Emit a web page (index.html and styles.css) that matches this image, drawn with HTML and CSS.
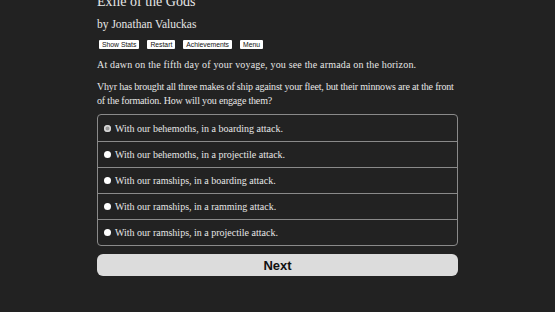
FILE: index.html
```html
<!DOCTYPE html>
<html>
<head>
<meta charset="utf-8">
<link rel="stylesheet" href="styles.css">
</head>
<body>
<div class="page">
  <h1 class="title">Exile of the Gods</h1>
  <h2 class="author">by Jonathan Valuckas</h2>
  <div class="toolbar">
    <button class="tb">Show Stats</button>
    <button class="tb">Restart</button>
    <button class="tb">Achievements</button>
    <button class="tb">Menu</button>
  </div>
  <p class="p1">At dawn on the fifth day of your voyage, you see the armada on the horizon.</p>
  <p class="p2">Vhyr has brought all three makes of ship against your fleet, but their minnows are at the front of the formation. How will you engage them?</p>
  <div class="choices">
    <label class="choice"><span class="radio checked"></span>With our behemoths, in a boarding attack.</label>
    <label class="choice"><span class="radio"></span>With our behemoths, in a projectile attack.</label>
    <label class="choice"><span class="radio"></span>With our ramships, in a boarding attack.</label>
    <label class="choice"><span class="radio"></span>With our ramships, in a ramming attack.</label>
    <label class="choice"><span class="radio"></span>With our ramships, in a projectile attack.</label>
  </div>
  <button class="next">Next</button>
</div>
</body>
</html>
```
FILE: styles.css
```css
html, body {
  margin: 0;
  padding: 0;
  background: #222222;
  height: 100%;
  overflow: hidden;
}
.page {
  width: 361px;
  margin: 0 0 0 97px;
  color: #e6e6e6;
  font-family: "Liberation Serif", "DejaVu Serif", serif;
  display: flex;
  flex-direction: column;
}
.title {
  margin: -7px 0 0 0;
  font-size: 14px;
  font-weight: normal;
  line-height: 17px;
  height: 16px;
}
.author {
  margin: 0;
  font-size: 11.5px;
  font-weight: normal;
  line-height: 14px;
  margin-top: 8px;
}
.toolbar {
  display: flex;
  gap: 8px;
  margin-top: 9px;
  padding-left: 2px;
}
.tb {
  font-family: "Liberation Sans", Arial, sans-serif;
  font-size: 6.8px;
  line-height: 7px;
  padding: 1px 3px;
  background: #ffffff;
  color: #111;
  border: none;
  border-radius: 1px;
  height: 9px;
}
.p1, .p2 {
  font-size: 10px;
  line-height: 14px;
  margin: 0;
}
.p1 { margin-top: 9px; letter-spacing: 0.18px; }
.p2 { margin-top: 8px; letter-spacing: -0.18px; }
.choices {
  margin-top: 6px;
  border: 1px solid #8a8a8a;
  border-radius: 4px;
  display: flex;
  flex-direction: column;
}
.choice {
  height: 25px;
  display: flex;
  align-items: center;
  font-size: 10px;
  padding-left: 6px;
  border-top: 1px solid #8a8a8a;
}
.choice:first-child { border-top: none; height: 26px; }
.radio {
  width: 7px;
  height: 7px;
  border-radius: 50%;
  background: #ffffff;
  margin-right: 4px;
  flex: none;
}
.radio.checked {
  background: #9a9a9a;
  box-shadow: inset 0 0 0 1.5px #d8d8d8;
}
.next {
  margin-top: 8px;
  height: 22px;
  border: none;
  border-radius: 6px;
  background: #dcdcdc;
  color: #111;
  font-family: "Liberation Sans", Arial, sans-serif;
  font-weight: bold;
  font-size: 13px;
}
```
